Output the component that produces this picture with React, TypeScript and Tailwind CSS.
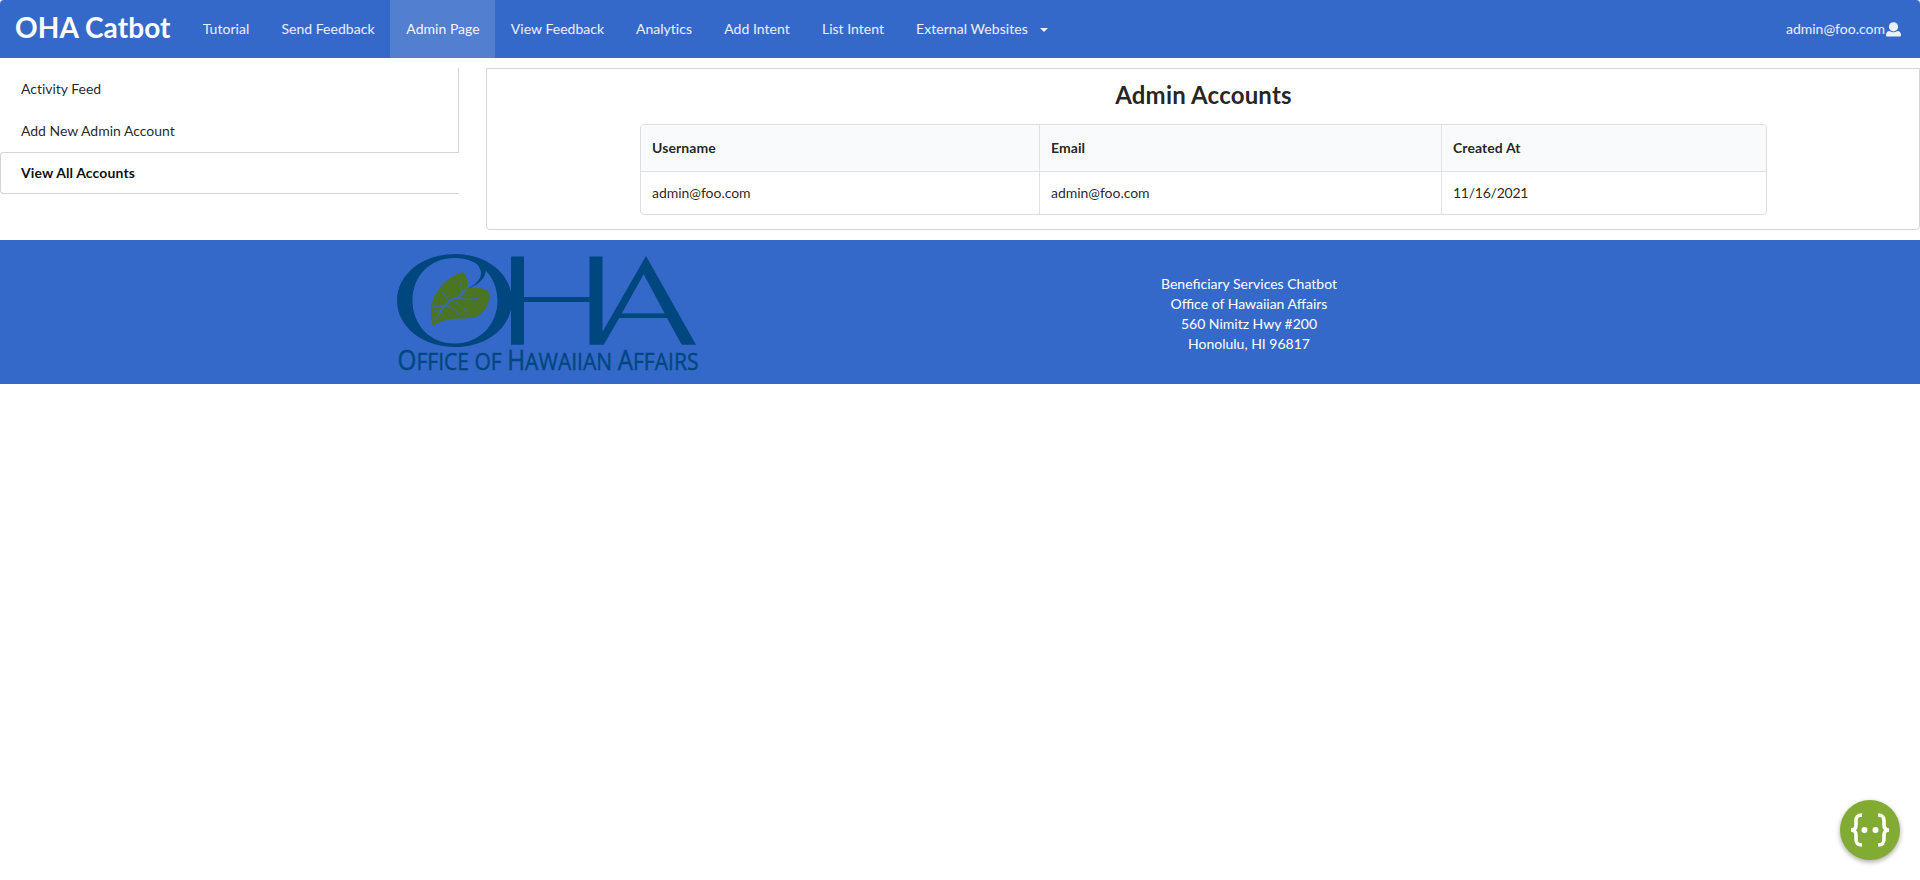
const links = [
  { label: 'Tutorial', w: 'w-[79px]' },
  { label: 'Send Feedback', w: 'w-[125px]' },
  { label: 'Admin Page', w: 'w-[105px]', active: true },
  { label: 'View Feedback', w: 'w-[124px]' },
  { label: 'Analytics', w: 'w-[89px]' },
  { label: 'Add Intent', w: 'w-[97px]' },
  { label: 'List Intent', w: 'w-[95px]' },
];

function Navbar() {
  return (
    <nav className="flex h-[58px] items-stretch rounded-t bg-[#3569c9] text-[14px] text-white/90">
      <a className="flex w-[186px] items-center pb-[4px] pl-[15px] text-[28px] font-bold tracking-[0.1px] whitespace-nowrap text-white">
        OHA Catbot
      </a>
      {links.map((l) => (
        <a
          key={l.label}
          className={`${l.w} flex shrink-0 items-center justify-center pb-[2px] pl-px tracking-[0.03px] whitespace-nowrap ${
            l.active ? 'bg-white/15 text-white/95' : ''
          }`}
        >
          {l.label}
        </a>
      ))}
      <a className="flex items-center pl-[16px] whitespace-nowrap">
        <span className="pb-[2px] tracking-[0.06px]">External Websites</span>
        <svg className="mt-[2px] ml-[12px] h-1 w-2" viewBox="0 0 8 4" fill="currentColor">
          <path d="M0 0h8L4 4z" />
        </svg>
      </a>
      <a className="ml-auto flex items-center pr-[19px] whitespace-nowrap">
        <span className="pb-[2px]">admin@foo.com</span>
        <svg className="ml-px h-[15px] w-[15px]" viewBox="0 0 15 15" fill="currentColor">
          <circle cx="7.5" cy="4.8" r="4.6" />
          <path d="M0 12.5C0 10.4 1.7 8.9 3.6 8.9Q7.5 11.4 11.4 8.9C13.3 8.9 15 10.4 15 12.5V13.4Q15 14.5 13.8 14.5H1.2Q0 14.5 0 13.4z" />
        </svg>
      </a>
    </nav>
  );
}

function Sidebar() {
  return (
    <div className="w-[459px] shrink-0 text-[14px]">
      <div className="h-[84px] border-r border-[#d4d4d5] tracking-[-0.02px]">
        <a className="flex h-[42px] items-center pb-[2px] pl-[21px]">Activity Feed</a>
        <a className="flex h-[42px] items-center pb-[2px] pl-[21px]">Add New Admin Account</a>
      </div>
      <a className="flex h-[42px] items-center rounded-l border border-r-0 border-[#d4d4d5] pb-[2px] pl-[20px] font-bold tracking-[0.12px] text-black/95">
        View All Accounts
      </a>
    </div>
  );
}

function AccountsTable() {
  return (
    <div className="ml-[153px] w-[1127px] overflow-hidden rounded border border-[#dededf] text-[14px]">
      <div className="flex h-[47px] border-b border-[#e1e1e2] bg-[#f9fafb] font-bold tracking-[0.08px]">
        <div className="flex w-[399px] items-center border-r border-[#e1e1e2] pb-[2px] pl-[11px]">Username</div>
        <div className="flex w-[402px] items-center border-r border-[#e1e1e2] pb-[2px] pl-[11px]">Email</div>
        <div className="flex items-center pb-[2px] pl-[11px]">Created At</div>
      </div>
      <div className="flex h-[42px] tracking-[-0.04px]">
        <div className="flex w-[399px] items-center border-r border-[#e1e1e2] pb-[2px] pl-[11px]">admin@foo.com</div>
        <div className="flex w-[402px] items-center border-r border-[#e1e1e2] pb-[2px] pl-[11px]">admin@foo.com</div>
        <div className="flex items-center pb-[2px] pl-[11px] tracking-[-0.25px]">11/16/2021</div>
      </div>
    </div>
  );
}

function Logo() {
  return (
    <svg className="h-[124px] w-[310px] overflow-visible" viewBox="0 0 310 124" fill="#00477f">
      <path
        fillRule="evenodd"
        d="M58 0C90 0 115 20 115 46.500S90 93 58 93S0 73 0 46.500S26 0 58 0zM57.500 4C33 4 15.500 22 15.500 46.500S33 89.500 57.500 89.500S100.500 71 100.500 46.500S82 4 57.500 4z"
      />
      <path d="M76 7C82 11 86 17 83 24C80 29 76 32 70 34.700C79 32 90 25 88.700 14z" />
      <path
        fillRule="evenodd"
        d="M114 2.500h13v40.500h65.500V2.500h13V77.700L249 2L299 90.700H284.700L270 64H222.300L206.700 90.700H192.500V48H127V90.700H114zM246.700 20.300L224.700 59.500H267.700z"
      />
      <path
        fill="#4b7522"
        d="M35.700 72C34 65 33.500 60 34 55C35 46 39 37 48 28C54 23 60 20 65.300 18.300C70 20 71.500 27 69.700 34.300C77 33.500 84 33.500 89.700 36C94 39 93 46 89.700 52.700C86 59 81 63 76.300 63.700C70 65 62 64 56.300 65C48 65.500 41 68 35.700 72z"
      />
      <g fill="none" stroke="#3569c9" strokeLinecap="round">
        <path strokeWidth="1.800" d="M69 35.500L61.300 43.500L53 46L43 57.700" />
        <path
          strokeWidth="1"
          d="M43 57.700L37 68M65.700 39.300L63.500 29.300M50.300 45L44.700 36.700M61 43.700Q72 47 81 44M54.700 46.500Q64 50 71 59M48 51.700Q56 52 61 60M48 52Q41 54 35.300 52M43 57.700L47.500 64M43 57.700L37 56.500"
        />
      </g>
      <text
        x="0.500"
        y="115.500"
        fontSize="26.5"
        textLength="301"
        lengthAdjust="spacingAndGlyphs"
        stroke="#00477f"
        strokeWidth="0.400"
        fontFamily="'Open Sans', sans-serif"
      >
        O<tspan fontSize="23">FFICE OF </tspan>H<tspan fontSize="23">AWAIIAN </tspan>A<tspan fontSize="23">FFAIRS</tspan>
      </text>
    </svg>
  );
}

function Footer() {
  return (
    <footer className="mt-[10px] flex h-[144px] bg-[#3569c9] text-white">
      <div className="pt-[14px] pl-[397px]">
        <Logo />
      </div>
      <address className="ml-[292px] w-[500px] pt-[34px] text-center text-[14px] leading-5 not-italic">
        Beneficiary Services Chatbot
        <br />
        Office of Hawaiian Affairs
        <br />
        560 Nimitz Hwy #200
        <br />
        Honolulu, HI 96817
      </address>
    </footer>
  );
}

function ChatButton() {
  return (
    <button className="fixed right-5 bottom-5 flex h-15 w-15 items-center justify-center rounded-full bg-[#82ab34] shadow-[0_2px_5px_rgba(0,0,0,0.35)]">
      <svg className="h-[34px] w-[40px]" viewBox="0 0 40 34" fill="none" stroke="#fff" strokeWidth="3.600">
        <path d="M12 2C7 2 6 4 6 8V12C6 15 4.500 17 1 17C4.500 17 6 19 6 22V26C6 30 7 32 12 32" />
        <path d="M28 2C33 2 34 4 34 8V12C34 15 35.500 17 39 17C35.500 17 34 19 34 22V26C34 30 33 32 28 32" />
        <g fill="#fff" stroke="none">
          <circle cx="14.500" cy="17" r="3" />
          <circle cx="25.500" cy="17" r="3" />
        </g>
      </svg>
    </button>
  );
}

export default function App() {
  return (
    <div className="min-h-screen bg-white font-['Lato',sans-serif] text-black/87">
      <Navbar />
      <div className="mt-[10px] flex items-start">
        <Sidebar />
        <main className="ml-[27px] h-[162px] w-[1434px] rounded-b border border-[#d4d4d5]">
          <h2 className="mb-[15px] pt-[11px] pl-px text-center text-[24px] leading-[29px] font-bold tracking-[0.18px]">
            Admin Accounts
          </h2>
          <AccountsTable />
        </main>
      </div>
      <Footer />
      <ChatButton />
    </div>
  );
}
